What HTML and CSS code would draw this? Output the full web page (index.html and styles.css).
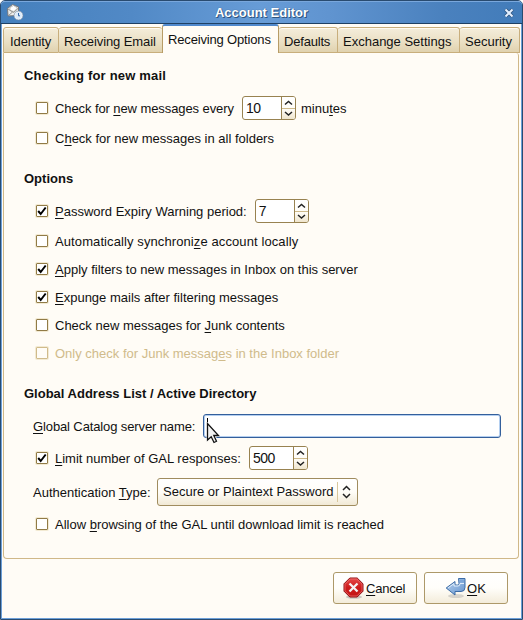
FILE: index.html
```
<!DOCTYPE html>
<html lang="en">
<head>
<meta charset="utf-8">
<title>Account Editor</title>
<link rel="stylesheet" href="styles.css">
</head>
<body>
<div class="window">
  <header class="titlebar">
    <svg class="app-icon" width="18" height="18" viewBox="0 0 18 18">
      <path d="M1.500 5.500 6.500 1.500 12.500 4v8.500l-10.500.5z" fill="#eeeeec" stroke="#77777a"/>
      <path d="M4 4.500 7.500 2.500l4 2.500-3.500 3.500-4-1z" fill="#fff" stroke="#a9a9a5" stroke-width=".7"/>
      <path d="M2 6 7.500 9.500l4.500-4M2.500 12.500l4-3.500" fill="none" stroke="#8c8c89" stroke-width=".9"/>
      <circle cx="12.500" cy="12.500" r="4" fill="#dcebfa" stroke="#fff" stroke-width="1.200"/>
      <circle cx="12.500" cy="12.500" r="4.400" fill="none" stroke="#6d86a5" stroke-width=".7"/>
      <path d="M12.500 10v2.800H14" fill="none" stroke="#3465a4"/>
    </svg>
    <h1>Account Editor</h1>
    <svg class="close" width="10" height="10" viewBox="0 0 10 10"><path d="M1.500 1.500l7 7m0-7l-7 7" stroke="#31567f" stroke-width="3.600"/><path d="M1.500 1.500l7 7m0-7l-7 7" stroke="#e4efff" stroke-width="2"/></svg>
  </header>
  <nav class="tabs">
    <div class="tab identity">Identity</div>
    <div class="tab email">Receiving Email</div>
    <div class="tab active">Receiving Options</div>
    <div class="tab defaults">Defaults</div>
    <div class="tab exchange">Exchange Settings</div>
    <div class="tab security">Security</div>
  </nav>
  <main class="panel">
    <h2 class="loose">Checking for new mail</h2>
    <div class="row first">
      <span class="check"></span><span class="every">Check for <u>n</u>ew messages every</span>
      <span class="spin after-every"><span class="value">10</span><span class="arrows"><svg width="13" height="22" viewBox="0 0 13 22"><path d="M0 11.500h13" stroke="#cdb98a"/><path d="M3 7.500l3.500-3 3.500 3M3 15l3.500 3 3.500-3" fill="none" stroke="#222" stroke-width="1.500"/></svg></span></span>
      <span class="unit">minu<u>t</u>es</span>
    </div>
    <div class="row second"><span class="check"></span><span>C<u>h</u>eck for new messages in all folders</span></div>

    <h2 class="section">Options</h2>
    <div class="row first">
      <span class="check on"></span><span><u>P</u>assword Expiry Warning period:</span>
      <span class="spin after-label"><span class="value">7</span><span class="arrows"><svg width="13" height="22" viewBox="0 0 13 22"><path d="M0 11.500h13" stroke="#cdb98a"/><path d="M3 7.500l3.500-3 3.500 3M3 15l3.500 3 3.500-3" fill="none" stroke="#222" stroke-width="1.500"/></svg></span></span>
    </div>
    <div class="row second"><span class="check"></span><span class="sync">Automatically synchroni<u>z</u>e account locally</span></div>
    <div class="row"><span class="check on"></span><span><u>A</u>pply filters to new messages in Inbox on this server</span></div>
    <div class="row"><span class="check on"></span><span><u>E</u>xpunge mails after filtering messages</span></div>
    <div class="row"><span class="check"></span><span>Check new messages for <u>J</u>unk contents</span></div>
    <div class="row disabled"><span class="check"></span><span>Only check for Junk messag<u>e</u>s in the Inbox folder</span></div>

    <h2 class="section">Global Address List / Active Directory</h2>
    <div class="row first field">
      <span class="catalog-label"><u>G</u>lobal Catalog server name:</span>
      <span class="entry"><span class="caret"></span>
        <svg class="pointer" width="14" height="22" viewBox="0 0 14 22"><path d="M1.500 1.500V18l3.700-3.300L8 20.500l3-1.500-2.700-5.500H13z" fill="#eee" stroke="#fff" stroke-width="2"/><path d="M1.500 1.500V18l3.700-3.300L8 20.500l2.500-1.200L7.800 13.500H12.500z" fill="#f2f2f2" stroke="#111" stroke-width="1.300"/></svg>
      </span>
    </div>
    <div class="row limit">
      <span class="check on"></span><span><u>L</u>imit number of GAL responses:</span>
      <span class="spin wide"><span class="value">500</span><span class="arrows"><svg width="13" height="22" viewBox="0 0 13 22"><path d="M0 11.500h13" stroke="#cdb98a"/><path d="M3 7.500l3.500-3 3.500 3M3 15l3.500 3 3.500-3" fill="none" stroke="#222" stroke-width="1.500"/></svg></span></span>
    </div>
    <div class="row auth field">
      <span class="auth-label">Authentication <u>T</u>ype:</span>
      <span class="combo"><span class="choice">Secure or Plaintext Password</span><svg width="9" height="14" viewBox="0 0 9 14"><path d="M1 5l3.500-3.500L8 5M1 9l3.500 3.500L8 9" fill="none" stroke="#222" stroke-width="1.500"/></svg></span>
    </div>
    <div class="row browse"><span class="check"></span><span>Allow <u>b</u>rowsing of the GAL until download limit is reached</span></div>
  </main>
  <footer class="actions">
    <div class="button cancel">
      <svg width="22" height="22" viewBox="0 0 22 22">
        <defs><linearGradient id="red" x2="0" y2="1"><stop stop-color="#e84a4a"/><stop offset=".5" stop-color="#cc1c1c"/><stop offset="1" stop-color="#c41414"/></linearGradient></defs>
        <ellipse cx="11" cy="20" rx="8" ry="1.800" fill="#888" opacity=".4"/>
        <path d="M6.800 1h7.400L20 6.800v7.400L14.200 20H6.800L1 14.200V6.800z" fill="url(#red)" stroke="#8f0f12"/>
        <path d="M7.200 2h6.600L19 7.200v6.600L13.800 19H7.200L2 13.800V7.200z" fill="none" stroke="#f07878" stroke-width=".7"/>
        <path d="M6.500 6.500l8 8m0-8l-8 8" stroke="#f4f4f4" stroke-width="2.300"/>
      </svg>
      <span><u>C</u>ancel</span>
    </div>
    <div class="button ok">
      <svg width="22" height="22" viewBox="0 0 22 22">
        <defs><linearGradient id="blue" x2="1" y2="1"><stop stop-color="#b9d3ef"/><stop offset="1" stop-color="#6594ce"/></linearGradient></defs>
        <ellipse cx="11" cy="19" rx="8" ry="2" fill="#888" opacity=".3"/>
        <path d="M13.500 1.500h6.500v9q0 4-4 4h-6v3.500L1.200 11 10 4.500V8h2.500q1.500 0 1.500-1.500z" fill="url(#blue)" stroke="#3d6ca6" stroke-linejoin="round"/>
        <path d="M14.600 2.500h4.400v3h-4.400z" fill="#7da6d8"/>
        <path d="M3 11l6-4.400V9h4q2 0 2-2.500h4" fill="none" stroke="#e1eefb"/>
      </svg>
      <span><u>O</u>K</span>
    </div>
  </footer>
</div>
</body>
</html>
```
FILE: styles.css
```
* { box-sizing: border-box; }
body {
  margin: 0;
  background: #fff;
  color: #111;
  font: 13px/16px "Liberation Sans", Arial, sans-serif;
}
h1, h2 { margin: 0; font-size: 13px; font-weight: bold; }
svg { display: block; flex: none; }
u { text-decoration-thickness: 1px; text-underline-offset: 2px; }

.window {
  display: flex;
  flex-direction: column;
  width: 523px;
  height: 620px;
  border: 1px solid #294b70;
  border-radius: 5px 5px 0 0;
  background: #fffcf6;
  box-shadow: inset 1px 0 #6c9fd8, inset -1px 0 #6c9fd8, inset 0 -1px #6c9fd8;
}
.titlebar {
  display: flex;
  align-items: center;
  height: 23px;
  padding: 0 4px 0 5px;
  border-top: 1px solid #79a7dc;
  border-bottom: 1px solid #1f4063;
  border-radius: 4px 4px 0 0;
  background: linear-gradient(90deg, #4580bd, #5189c6 25%, #679cd7 50%, #6094d0 63%, #4a81be 85%, #427cba);
}
.titlebar h1 {
  flex: 1;
  padding-right: 5px;
  text-align: center;
  color: #fff;
  text-shadow: 1px 1px #2e547f, 0 0 1px #2e547f;
}
.app-icon { margin-top: -1px; }
.close { margin: 1px 4px 0 0; }

.tabs {
  display: flex;
  align-items: flex-end;
  height: 29px;
  padding: 0 2px;
}
.tab {
  height: 26px;
  padding: 6px 0 0 6px;
  border: 1px solid #c8ae7c;
  border-left-width: 0;
  border-radius: 3px 3px 0 0;
  background: linear-gradient(#f4eddb, #eadfc3 60%, #e0d2af);
  box-shadow: inset 0 1px #fffaf0;
  white-space: nowrap;
}
.tab.identity { width: 56px; border-left-width: 1px; letter-spacing: -0.1px; }
.tab.email { width: 103px; padding-left: 5px; border-right: 0; letter-spacing: -0.1px; }
.tab.active {
  width: 117px;
  height: 29px;
  padding: 6px 0 0 5px;
  border: solid #b79c66;
  border-width: 0 1px;
  border-top: 2px solid #5089cd;
  background: #fffcf6;
  box-shadow: none;
  letter-spacing: -0.16px;
}
.tab.defaults { width: 59px; padding-left: 5px; letter-spacing: -0.2px; }
.tab.exchange { width: 122px; padding-left: 5px; }
.tab.security { flex: 1; padding-left: 5px; }

.panel {
  height: 506px;
  margin: 0 3px 0 2px;
  padding: 8px 17px 0 20px;
  border: 1px solid #d0b888;
  border-top: 0;
  border-radius: 0 3px 4px 4px;
}
.panel h2, .row {
  display: flex;
  align-items: center;
  height: 28px;
  white-space: nowrap;
}
.panel h2 { padding-top: 1px; }
.panel h2.loose { letter-spacing: 0.2px; }
.panel h2.section { margin-top: 12px; }
.row { padding-left: 12px; }
.row > span:not([class]), .every, .sync, .unit, .catalog-label, .auth-label { padding-top: 1px; }
.row.field { padding-left: 9px; }
.row.first { margin-top: 5px; }
.row.second { margin-top: 2px; }
.row.limit, .row.browse { margin-top: 4px; }
.row.auth { margin-top: 6px; }
.every { width: 181px; letter-spacing: -0.09px; }
.sync { letter-spacing: 0.1px; }

.check {
  width: 12px;
  height: 12px;
  margin-right: 7px;
  border: 1px solid #917b47;
  border-radius: 1px;
  background: #fff;
  box-shadow: 0 0 0 1px #f3ead2;
}
.check.on {
  background: url("data:image/svg+xml,%3Csvg xmlns='http://www.w3.org/2000/svg' viewBox='0 0 10 10'%3E%3Cpath d='M1.200 5 3.700 8 8.700 1.500' fill='none' stroke='%23000' stroke-width='2'/%3E%3C/svg%3E") #fff;
}
.disabled { color: #d0bb8b; }
.disabled .check { border-color: #d0bb8b; background: #fffcf6; }

.spin {
  display: flex;
  width: 54px;
  height: 24px;
  border: 1px solid #988250;
  border-radius: 3px;
  background: #fff;
  overflow: hidden;
  font-size: 14px;
}
.spin .value { flex: 1; padding: 3px 0 0 3px; letter-spacing: -0.5px; }
.arrows {
  width: 14px;
  border-left: 1px solid #988250;
  background: linear-gradient(#fff, #fffdf8 55%, #efe5cd);
}
.after-every { margin-left: 6px; }
.after-label { margin-left: 8px; }
.wide { width: 59px; margin-left: 8px; }
.unit { margin-left: 5px; }

.catalog-label { width: 170px; letter-spacing: -0.12px; }
.entry {
  position: relative;
  flex: 1;
  height: 24px;
  padding: 3px;
  border: 1px solid #345f9b;
  border-radius: 3px;
  background: #fff;
  box-shadow: inset 0 0 0 1px #b4cff0;
}
.caret { display: block; width: 1px; height: 17px; background: #000; }
.pointer { position: absolute; left: 2px; top: 7px; }

.auth-label { width: 124px; }
.combo {
  display: flex;
  align-items: center;
  width: 201px;
  height: 28px;
  padding-left: 5px;
  border: 1px solid #a08c5e;
  border-radius: 3px;
  background: linear-gradient(#fff, #fffdf8 50%, #f1e9d5);
}
.choice {
  width: 175px;
  height: 20px;
  padding-top: 2px;
  margin-right: 4px;
  border-right: 1px solid #d8c79d;
}

.actions { display: flex; gap: 7px; padding: 13px 0 0 332px; }
.button {
  display: flex;
  align-items: center;
  width: 84px;
  height: 32px;
  border: 1px solid #ad9969;
  border-radius: 3px;
  background: linear-gradient(#fff, #fffefa 50%, #f3ecda);
}
.button span { padding-top: 1px; }
.button.cancel { padding-left: 9px; letter-spacing: -0.2px; }
.button.cancel span { margin-left: 1px; }
.button.ok { padding-left: 20px; }
```
